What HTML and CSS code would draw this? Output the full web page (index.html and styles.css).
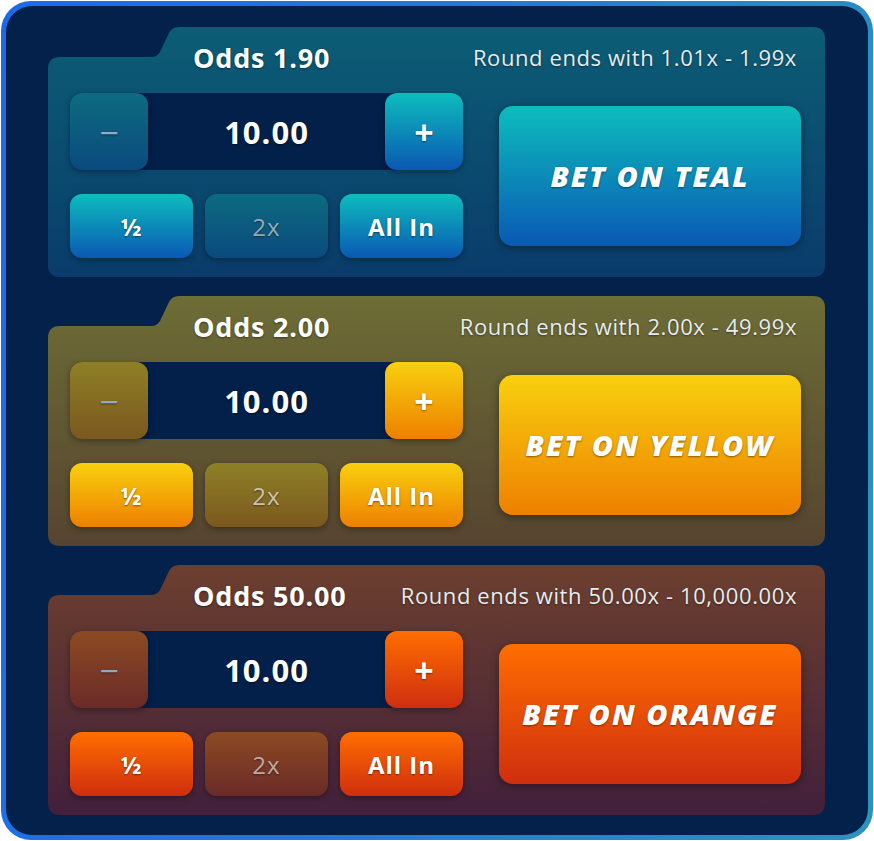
FILE: index.html
```html
<!DOCTYPE html>
<html lang="en">
<head>
  <meta charset="UTF-8" />
  <title>Bet panels</title>
  <link rel="stylesheet" href="styles.css">
</head>
<body>
  <div class="frame">
    <div class="board">

      <!-- Teal -->
      <div class="panel teal">
        <div class="head">
          <span class="odds">Odds 1.90</span>
          <span class="range">Round ends with 1.01x - 1.99x</span>
        </div>
        <div class="body">
          <div class="controls">
            <div class="stepper">
              <button class="step minus">&minus;</button>
              <span class="amount">10.00</span>
              <button class="step plus">+</button>
            </div>
            <div class="quick">
              <button class="chip">½</button>
              <button class="chip dim">2x</button>
              <button class="chip">All In</button>
            </div>
          </div>
          <button class="bet">BET ON TEAL</button>
        </div>
      </div>

      <!-- Yellow -->
      <div class="panel yellow">
        <div class="head">
          <span class="odds">Odds 2.00</span>
          <span class="range">Round ends with 2.00x - 49.99x</span>
        </div>
        <div class="body">
          <div class="controls">
            <div class="stepper">
              <button class="step minus">&minus;</button>
              <span class="amount">10.00</span>
              <button class="step plus">+</button>
            </div>
            <div class="quick">
              <button class="chip">½</button>
              <button class="chip dim">2x</button>
              <button class="chip">All In</button>
            </div>
          </div>
          <button class="bet">BET ON YELLOW</button>
        </div>
      </div>

      <!-- Orange -->
      <div class="panel orange">
        <div class="head">
          <span class="odds">Odds 50.00</span>
          <span class="range">Round ends with 50.00x - 10,000.00x</span>
        </div>
        <div class="body">
          <div class="controls">
            <div class="stepper">
              <button class="step minus">&minus;</button>
              <span class="amount">10.00</span>
              <button class="step plus">+</button>
            </div>
            <div class="quick">
              <button class="chip">½</button>
              <button class="chip dim">2x</button>
              <button class="chip">All In</button>
            </div>
          </div>
          <button class="bet">BET ON ORANGE</button>
        </div>
      </div>

    </div>
  </div>
</body>
</html>
```

FILE: styles.css
```css
body {
  margin: 0;
  background: #fff;
  font-family: "Open Sans", Lato, sans-serif;
  color: #fff;
}

.frame {
  margin: 1px;
  height: 839px;
  box-sizing: border-box;
  padding: 5px;
  border-radius: 30px;
  background: linear-gradient(100deg, #1b6be8 0%, #2278d8 45%, #2b93bd 100%);
}

.board {
  height: 100%;
  box-sizing: border-box;
  padding: 21px 42px 0 42px;
  border-radius: 26px;
  background: #03214b;
  display: flex;
  flex-direction: column;
  gap: 19px;
}

/* Panneau avec onglet en haut */
.panel {
  width: 777px;
  height: 250px;
  flex: none;
  background: linear-gradient(180deg, var(--p-top), var(--p-bot));
  clip-path: path('M0,42 Q0,30 12,30 L103,30 Q109,30 112,25 L121,6 Q124,0 131,0 L765,0 Q777,0 777,12 L777,238 Q777,250 765,250 L12,250 Q0,250 0,238 Z');
}

.teal {
  --p-top: #0c5d75; --p-bot: #0a3c6b;
  --b-top: #0dbdbd; --b-bot: #0a58b3;
  --d-top: #0d6b80; --d-bot: #0b4a7e;
  --d-text: #93aab6;
}
.yellow {
  --p-top: #6d6d36; --p-bot: #564430;
  --b-top: #f8d00e; --b-bot: #ee8000;
  --d-top: #8e8026; --d-bot: #7b581f;
  --d-text: #c9c2ae;
}
.orange {
  --p-top: #6c3f2e; --p-bot: #42203b;
  --b-top: #ff6e00; --b-bot: #cf2e0f;
  --d-top: #8c4a23; --d-bot: #6a2b28;
  --d-text: #bfa9a6;
}

.head {
  height: 66px;
  box-sizing: border-box;
  padding: 0 28px 6px 145px;
  display: flex;
  align-items: center;
  justify-content: space-between;
  text-shadow: 0 1px 2px rgba(0,0,0,0.45);
}

.odds {
  font-size: 27px;
  font-weight: 700;
  letter-spacing: 0.8px;
}

.range {
  font-size: 22px;
  color: #e6ecef;
  letter-spacing: 0.6px;
}

.body {
  display: flex;
  align-items: center;
  gap: 36px;
  padding: 0 24px 0 22px;
}

.controls {
  width: 393px;
  display: flex;
  flex-direction: column;
  gap: 24px;
}

button {
  font-family: inherit;
  color: #fff;
  border: 0;
  padding: 0;
  cursor: pointer;
  text-shadow: 0 1px 2px rgba(0,0,0,0.45);
}

.stepper {
  height: 77px;
  display: flex;
  background: #03204a;
  border-radius: 12px;
}

.amount {
  flex: 1;
  display: flex;
  align-items: center;
  justify-content: center;
  font-size: 31px;
  font-weight: 700;
  letter-spacing: 1px;
  text-shadow: 0 1px 2px rgba(0,0,0,0.6);
}

.step {
  width: 78px;
  border-radius: 12px;
  font-size: 34px;
  font-weight: 700;
  box-shadow: 0 2px 6px rgba(0,0,0,0.35);
}

.minus {
  background: linear-gradient(180deg, var(--d-top), var(--d-bot));
  color: #8eaac4;
  font-weight: 400;
}

.plus,
.chip,
.bet {
  background: linear-gradient(180deg, var(--b-top), var(--b-bot));
}

.quick {
  display: grid;
  grid-template-columns: repeat(3, 1fr);
  gap: 12px;
}

.chip {
  height: 64px;
  border-radius: 12px;
  font-size: 24px;
  font-weight: 700;
  letter-spacing: 1px;
  box-shadow: 0 2px 6px rgba(0,0,0,0.35);
}

.chip.dim {
  background: linear-gradient(180deg, var(--d-top), var(--d-bot));
  color: var(--d-text);
  font-weight: 400;
}

.bet {
  width: 302px;
  height: 140px;
  border-radius: 14px;
  font-size: 29px;
  font-weight: 800;
  font-style: italic;
  letter-spacing: 2px;
  box-shadow: 0 2px 8px rgba(0,0,0,0.4);
}
```
